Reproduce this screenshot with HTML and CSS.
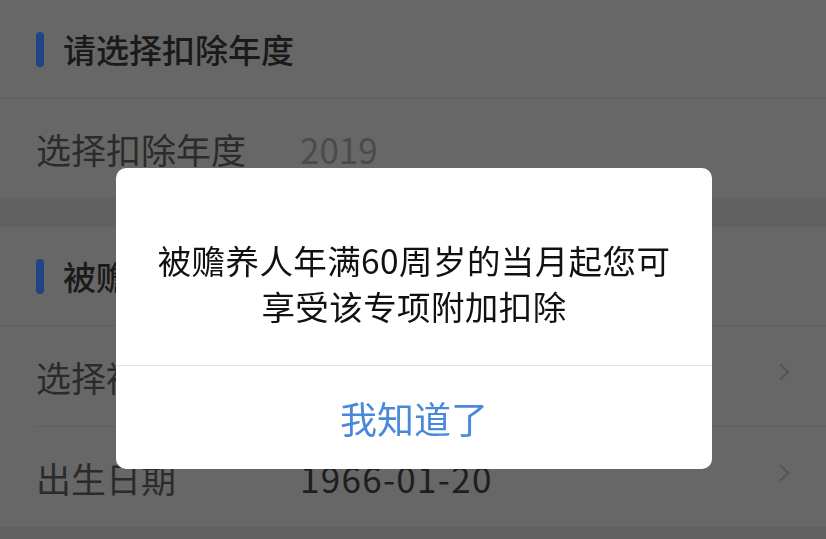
FILE: index.html
```html
<!DOCTYPE html>
<html lang="zh-CN">
<head>
    <meta charset="UTF-8">
    <meta name="viewport" content="width=device-width, initial-scale=1.0">
    <title>赡养老人</title>
    <link rel="stylesheet" href="styles.css">
</head>
<body>
<div class="page">
    <div class="section-title">请选择扣除年度</div>
    <div class="row">
        <span class="row-label">选择扣除年度</span>
        <span class="row-value muted">2019</span>
    </div>

    <div class="gap"></div>

    <div class="section-title">被赡养人信息</div>
    <div class="row inset">
        <span class="row-label">选择被赡养人</span>
        <span class="row-value"></span>
        <span class="chevron"></span>
    </div>
    <div class="row">
        <span class="row-label">出生日期</span>
        <span class="row-value date">1966-01-20</span>
        <span class="chevron"></span>
    </div>

    <div class="gap"></div>
</div>

<!-- 提示弹窗 -->
<div class="mask">
    <div class="dialog">
        <div class="dialog-body">被赡养人年满60周岁的当月起您可<br>享受该专项附加扣除</div>
        <div class="dialog-btn">我知道了</div>
    </div>
</div>
</body>
</html>
```

FILE: styles.css
```css
* {
    box-sizing: border-box;
    margin: 0;
    padding: 0;
}

body {
    font-family: "Noto Sans CJK SC", "Noto Sans", sans-serif;
    background: #676767;
    width: 826px;
    height: 539px;
    overflow: hidden;
}

.page {
    height: 539px;
    overflow: hidden;
    background: #676767;
}

.section-title {
    position: relative;
    height: 99px;
    display: flex;
    align-items: center;
    padding-left: 63px;
    font-size: 33px;
    font-weight: 500;
    color: #1a1a1a;
    border-bottom: 1px solid #5d5d5d;
}

.section-title::before {
    content: "";
    position: absolute;
    left: 36px;
    top: 50%;
    width: 8px;
    height: 35px;
    margin-top: -17px;
    border-radius: 4px;
    background: #1f4384;
}

.row {
    height: 99px;
    display: flex;
    align-items: center;
    padding: 0 36px;
    font-size: 35px;
    color: #2b2b2b;
}

.row.inset {
    height: 101px;
    border-bottom: 1px solid #5d5d5d;
    margin-left: 36px;
    padding-left: 0;
}

.row + .row {
    height: 100px;
}

.row-label {
    width: 264px;
    flex-shrink: 0;
}

.row-value {
    flex: 1;
    color: #1e1e1e;
}

.row-value.muted {
    color: #4b4b4b;
}

.row-value.date {
    letter-spacing: 1.3px;
}

.chevron {
    width: 12px;
    height: 12px;
    border-top: 2px solid #555555;
    border-right: 2px solid #555555;
    transform: rotate(45deg);
    margin-right: 3px;
    margin-top: -8px;
}

.gap {
    height: 29px;
    background: #616161;
}

.mask {
    position: fixed;
    top: 0;
    left: 0;
    right: 0;
    bottom: 0;
    display: flex;
    justify-content: center;
    align-items: flex-start;
    padding-top: 168px;
    padding-left: 2px;
}

.dialog {
    width: 596px;
    background: #fff;
    border-radius: 10px;
    overflow: hidden;
}

.dialog-body {
    height: 198px;
    padding-top: 69px;
    text-align: center;
    font-size: 33.5px;
    line-height: 46px;
    letter-spacing: 0.4px;
    color: #111;
    border-bottom: 1px solid #e4e4e4;
}

.dialog-btn {
    height: 103px;
    display: flex;
    align-items: center;
    justify-content: center;
    font-size: 37px;
    color: #4a88dc;
}
```
